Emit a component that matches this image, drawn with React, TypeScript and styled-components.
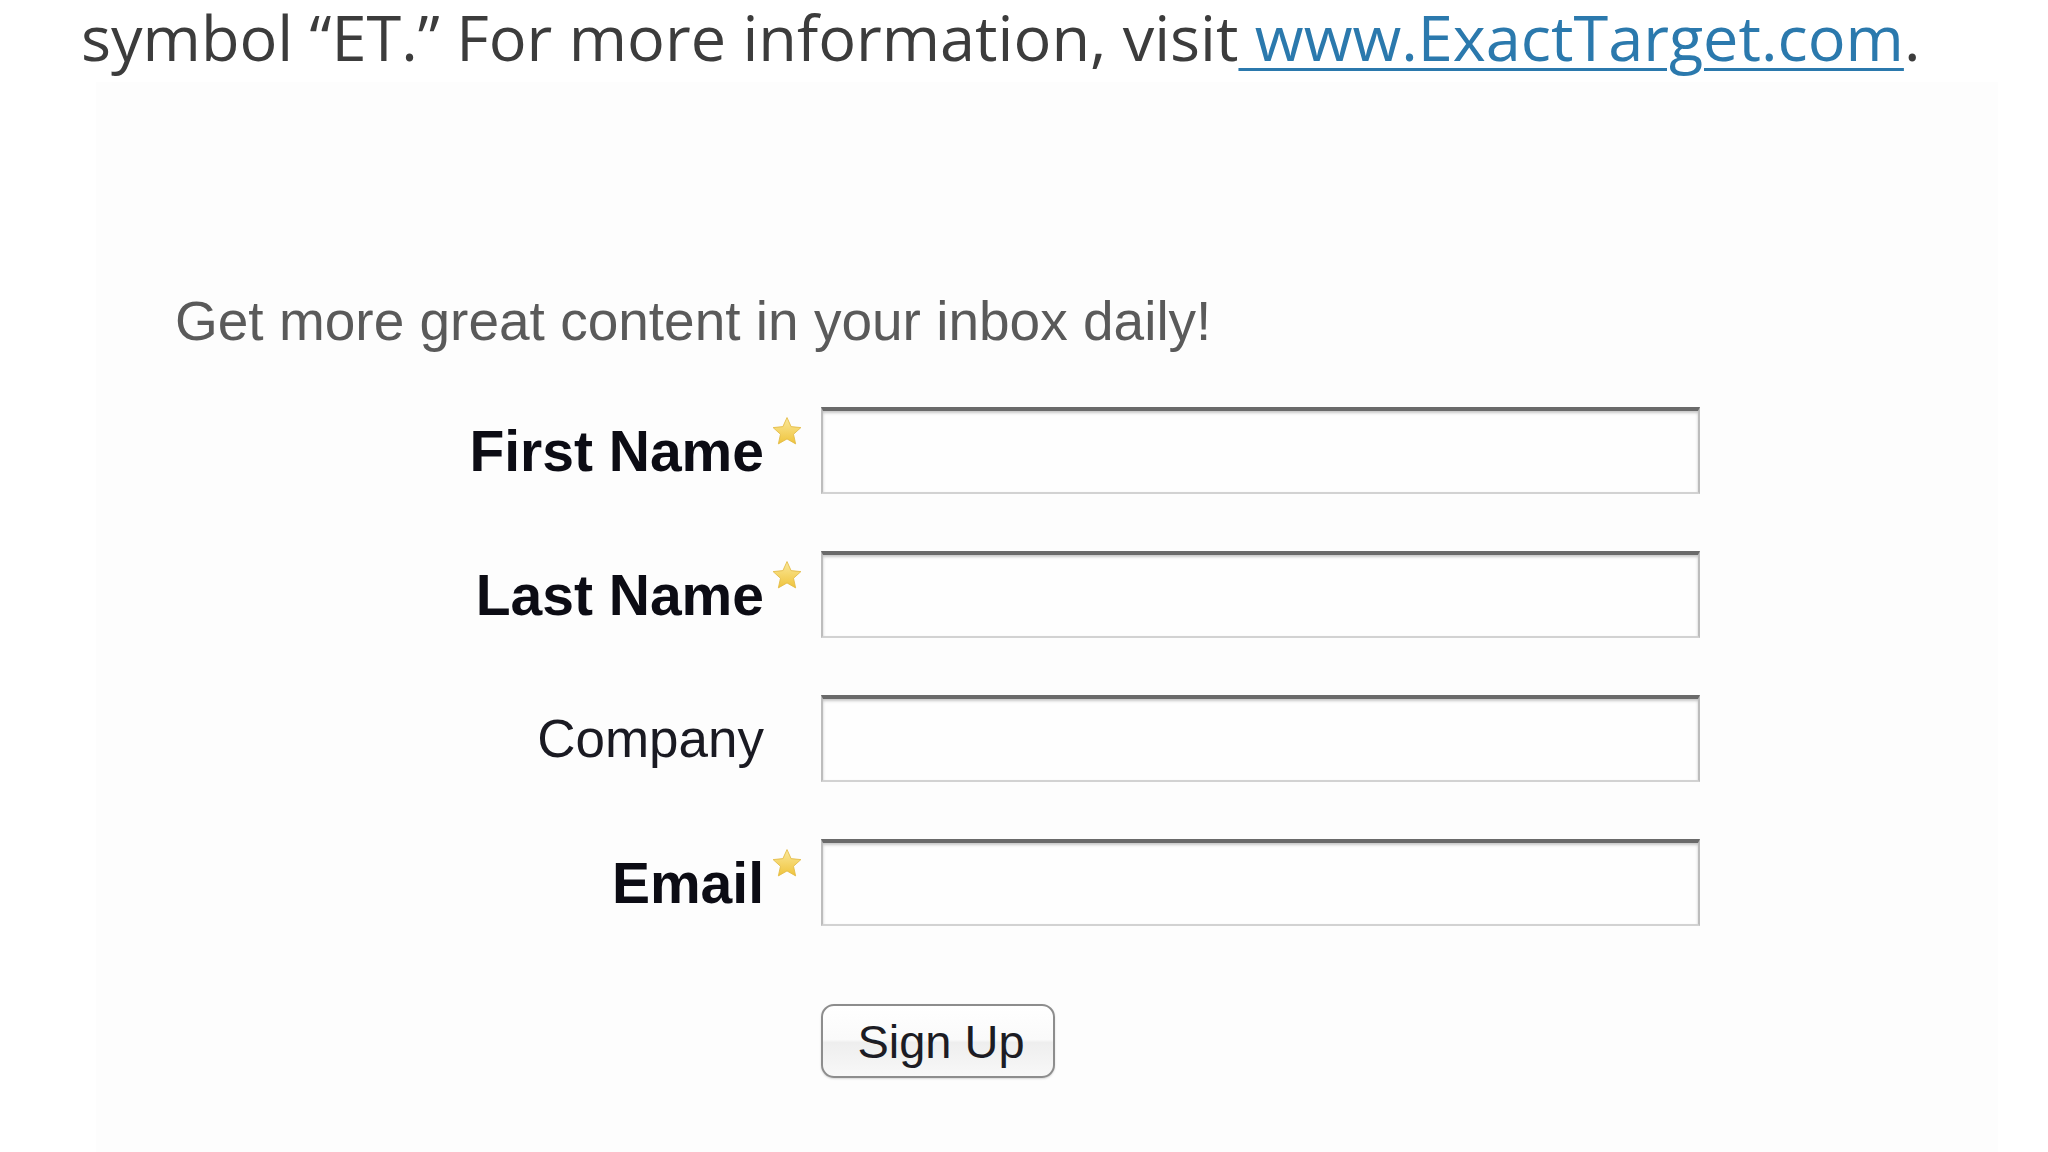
import styled, { createGlobalStyle } from "styled-components";

const fields = [
  { id: "first", label: "First Name", required: true },
  { id: "last", label: "Last Name", required: true },
  { id: "company", label: "Company", required: false },
  { id: "email", label: "Email", required: true },
];

const Star = () => (
  <svg width="34" height="34" viewBox="0 0 24 24">
    <defs>
      <linearGradient id="starFill" x1="0" y1="0" x2="0" y2="1">
        <stop offset="0%" stopColor="#fbe89a" />
        <stop offset="100%" stopColor="#efc43c" />
      </linearGradient>
    </defs>
    <path
      d="M12 1.8l2.9 6.4 6.9.7-5.2 4.7 1.5 6.8L12 16.9l-6.1 3.5 1.5-6.8L2.2 8.9l6.9-.7z"
      fill="url(#starFill)"
      stroke="#e3bb45"
      strokeWidth="0.6"
      strokeLinejoin="round"
    />
  </svg>
);

const App = () => {
  return (
    <Page>
      <GlobalStyle />
      <Intro>
        symbol “ET.” For more information, visit
        <Link href="#"> www.ExactTarget.com</Link>.
      </Intro>
      <Panel>
        <Heading>Get more great content in your inbox daily!</Heading>
        <Form onSubmit={(e) => e.preventDefault()}>
          {fields.map((f) => (
            <Row key={f.id}>
              <Label htmlFor={f.id} $required={f.required}>
                {f.label}
              </Label>
              <StarSlot>{f.required && <Star />}</StarSlot>
              <Input id={f.id} type="text" />
            </Row>
          ))}
          <ActionRow>
            <Button type="submit">Sign Up</Button>
          </ActionRow>
        </Form>
      </Panel>
    </Page>
  );
};

const GlobalStyle = createGlobalStyle`
  html, body {
    margin: 0;
    padding: 0;
    background: #ffffff;
  }
  body {
    width: 2048px;
    height: 1152px;
    overflow: hidden;
  }
`;

const Page = styled.div`
  width: 2048px;
  height: 1152px;
  display: flex;
  flex-direction: column;
  background: #ffffff;
`;

const Intro = styled.p`
  flex: none;
  margin: 0;
  padding: 2px 0 10px 81px;
  font-family: "Open Sans", sans-serif;
  font-size: 63px;
  line-height: 70px;
  color: #3c3c3c;
  white-space: nowrap;
  -webkit-font-smoothing: antialiased;
`;

const Link = styled.a`
  color: #2b79ad;
  text-decoration: underline;
  text-decoration-thickness: 3px;
  text-underline-offset: 7px;
`;

const Panel = styled.section`
  flex: 1;
  margin: 0 50px 0 96px;
  padding: 208px 0 0 79px;
  background: #fdfdfd;
`;

const Heading = styled.p`
  margin: 0;
  font-family: "Liberation Sans", Arial, sans-serif;
  font-size: 55px;
  line-height: 63px;
  color: #5a5a5a;
`;

const Form = styled.form`
  display: flex;
  flex-direction: column;
  gap: 57px;
  margin-top: 54px;
`;

const Row = styled.div`
  display: grid;
  grid-template-columns: 589px 57px 879px;
  align-items: center;
  height: 87px;
`;

const ActionRow = styled.div`
  display: grid;
  grid-template-columns: 646px 234px;
  margin-top: 21px;

  & > * {
    grid-column: 2;
  }
`;

const Label = styled.label<{ $required?: boolean }>`
  text-align: right;
  font-family: "Liberation Sans", Arial, sans-serif;
  font-size: ${(p) => (p.$required ? 57 : 53)}px;
  font-weight: ${(p) => (p.$required ? 700 : 400)};
  color: ${(p) => (p.$required ? "#0c0c14" : "#1a1a22")};
  white-space: nowrap;
`;

const StarSlot = styled.span`
  align-self: start;
  padding: 8px 0 0 6px;
  height: 34px;
  line-height: 0;
`;

const Input = styled.input`
  box-sizing: border-box;
  width: 879px;
  height: 87px;
  margin: 0;
  padding: 0 12px;
  border: 2px solid #bdbdbd;
  border-top: 4px solid #6a6a6a;
  border-bottom-color: #d2d2d2;
  background: #fefefe;
  box-shadow: inset 0 2px 3px rgba(0, 0, 0, 0.22);
  font-size: 40px;
  outline: none;
`;

const Button = styled.button`
  box-sizing: border-box;
  width: 234px;
  height: 74px;
  margin: 0;
  padding: 0 0 0 6px;
  border: 2px solid #8d8d8d;
  border-radius: 13px;
  background: linear-gradient(
    #ffffff 0%,
    #fafafa 48%,
    #eeeeee 52%,
    #f8f8f8 100%
  );
  box-shadow: 0 1px 2px rgba(0, 0, 0, 0.15);
  font-family: "Liberation Sans", Arial, sans-serif;
  font-size: 47px;
  color: #1c1c24;
  cursor: pointer;
`;

export default App;
